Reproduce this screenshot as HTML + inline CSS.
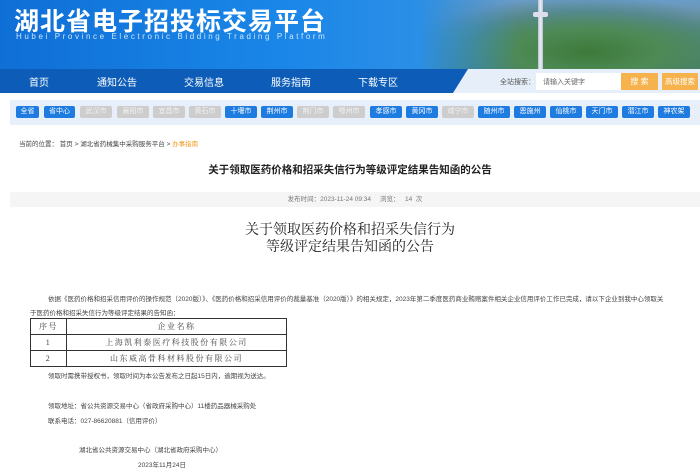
<!DOCTYPE html>
<html><head><meta charset="utf-8">
<style>
*{margin:0;padding:0;box-sizing:border-box}
body{width:700px;height:472px;overflow:hidden;background:#fff;font-family:"Liberation Sans","Noto Sans CJK SC",sans-serif;position:relative;color:#333}
.abs{position:absolute}
#hdr{left:0;top:0;width:700px;height:69px;background:linear-gradient(90deg,#0f6fd6 0%,#1a86e8 40%,#2b8fe6 60%,#3a8fd0 75%,#4a8ab0 100%);overflow:hidden}
#photo{left:420px;top:0;width:280px;height:69px;background:radial-gradient(ellipse at 60% 75%,#3d7a3a 0%,#4e8a55 30%,rgba(70,130,120,.6) 55%,rgba(40,130,220,0) 75%),linear-gradient(180deg,#6a9cc8 0%,#6d92a8 25%,#5b8f72 50%,#4b7f4a 100%);-webkit-mask:linear-gradient(90deg,transparent 0,#000 35%);}
#tower{left:538px;top:0;width:5px;height:69px;background:linear-gradient(90deg,#b8c4cc,#eef,#b8c4cc)}
#ttop{left:533px;top:12px;width:15px;height:5px;background:#dde;border-radius:2px}
#t1{left:14px;top:2px;font-size:25px;font-weight:bold;color:#fff;letter-spacing:1px;font-family:"Noto Sans CJK SC",sans-serif}
#t2{left:16px;top:32px;font-size:8px;color:#cfe6ff;letter-spacing:2.6px}
#nav{left:0;top:69px;width:470px;height:24px;background:#0d5db8;clip-path:polygon(0 0,100% 0,453px 100%,0 100%)}
#navr{left:440px;top:69px;width:260px;height:24px;background:#e6eff9;clip-path:polygon(28px 0,100% 0,100% 100%,13px 100%)}
.nv{top:74px;font-size:10px;color:#fff}
#sl{left:500px;top:77px;font-size:7px;color:#555}
#inp{left:536px;top:73px;width:85px;height:17px;background:#fff;font-size:7px;color:#666;padding:4px 0 0 7px}
#sb{left:621px;top:73px;width:37px;height:17px;background:#f6b24d;color:#fff;font-size:8px;text-align:center;line-height:17px}
#sb2{left:662px;top:73px;width:36px;height:17px;background:#f6b24d;color:#fff;font-size:7.5px;text-align:center;line-height:17px}
#city{left:10px;top:100px;width:690px;height:25px;background:#e7f0fa}
.cb{top:106px;width:32px;height:12px;background:#1e7be0;color:#fff;font-size:7px;text-align:center;line-height:12px;border-radius:2px}
.g{background:#cdcdcd;color:#f2f2f2}
#bc{left:19px;top:138px;font-size:6.5px;color:#444}
#tt{left:0;width:700px;top:162px;text-align:center;font-size:10.5px;font-weight:bold;color:#222}
#meta{left:10px;top:192px;width:690px;height:15px;background:#f5f5f5;text-align:center;font-size:6.5px;color:#777;line-height:15px}
#bt{left:0;width:700px;top:222px;text-align:center;font-size:14px;line-height:17px;color:#222;font-family:"Liberation Serif","Noto Serif CJK SC",serif}
.p{font-size:6.5px;color:#444;white-space:nowrap}
table{position:absolute;left:30px;top:318px;width:257px;border-collapse:collapse;font-family:"Liberation Serif","Noto Serif CJK SC",serif;font-size:8px;color:#444}
td{border:1px solid #333;height:16px;text-align:center;letter-spacing:1.5px}
</style></head><body>
<div id="hdr" class="abs"></div>
<div id="photo" class="abs"></div>
<div id="tower" class="abs"></div><div id="ttop" class="abs"></div>
<div id="t1" class="abs">湖北省电子招投标交易平台</div>
<div id="t2" class="abs">Hubei Province Electronic Bidding Trading Platform</div>
<div id="nav" class="abs"></div><div id="navr" class="abs"></div>
<div class="abs nv" style="left:29px">首页</div>
<div class="abs nv" style="left:97px">通知公告</div>
<div class="abs nv" style="left:184px">交易信息</div>
<div class="abs nv" style="left:271px">服务指南</div>
<div class="abs nv" style="left:358px">下载专区</div>
<div id="sl" class="abs">全站搜索：</div>
<div id="inp" class="abs">请输入关键字</div>
<div id="sb" class="abs">搜 索</div>
<div id="sb2" class="abs">高级搜索</div>
<div id="city" class="abs"></div>
<div class="abs cb" style="left:16px;width:23px">全省</div>
<div class="abs cb" style="left:44px;width:31px">省中心</div>
<div class="abs cb g" style="left:80px">武汉市</div>
<div class="abs cb g" style="left:117px">襄阳市</div>
<div class="abs cb g" style="left:153px">宜昌市</div>
<div class="abs cb g" style="left:189px">黄石市</div>
<div class="abs cb" style="left:225px">十堰市</div>
<div class="abs cb" style="left:261px">荆州市</div>
<div class="abs cb g" style="left:297px">荆门市</div>
<div class="abs cb g" style="left:333px">鄂州市</div>
<div class="abs cb" style="left:370px">孝感市</div>
<div class="abs cb" style="left:406px">黄冈市</div>
<div class="abs cb g" style="left:442px">咸宁市</div>
<div class="abs cb" style="left:478px">随州市</div>
<div class="abs cb" style="left:514px">恩施州</div>
<div class="abs cb" style="left:550px">仙桃市</div>
<div class="abs cb" style="left:586px">天门市</div>
<div class="abs cb" style="left:622px">潜江市</div>
<div class="abs cb" style="left:658px">神农架</div>
<div id="bc" class="abs">当前的位置： 首页 &gt; 湖北省药械集中采购服务平台 &gt; <span style="color:#f39a1e">办事指南</span></div>
<div id="tt" class="abs">关于领取医药价格和招采失信行为等级评定结果告知函的公告</div>
<div id="meta" class="abs">发布时间：2023-11-24 09:34 &nbsp;&nbsp;&nbsp; 浏览： &nbsp; 14 &nbsp;次</div>
<div id="bt" class="abs">关于领取医药价格和招采失信行为<br>等级评定结果告知函的公告</div>
<div class="abs p" style="left:48px;top:293px">依据《医药价格和招采信用评价的操作规范（2020版）》、《医药价格和招采信用评价的裁量基准（2020版）》的相关规定，2023年第二季度医药商业贿赂案件相关企业信用评价工作已完成，请以下企业到我中心领取关</div>
<div class="abs p" style="left:30px;top:307px">于医药价格和招采失信行为等级评定结果的告知函：</div>
<table>
<tr><td style="width:36px">序号</td><td>企业名称</td></tr>
<tr><td>1</td><td>上海凯利泰医疗科技股份有限公司</td></tr>
<tr><td>2</td><td>山东威高骨科材料股份有限公司</td></tr>
</table>
<div class="abs p" style="left:48px;top:370px">领取时需携带授权书，领取时间为本公告发布之日起15日内，逾期视为送达。</div>
<div class="abs p" style="left:48px;top:400px">领取地址：省公共资源交易中心（省政府采购中心）11楼药品器械采购处</div>
<div class="abs p" style="left:48px;top:415px">联系电话：027-86620881（信用评价）</div>
<div class="abs p" style="left:79px;top:444px">湖北省公共资源交易中心（湖北省政府采购中心）</div>
<div class="abs p" style="left:138px;top:459px">2023年11月24日</div>
</body></html>
